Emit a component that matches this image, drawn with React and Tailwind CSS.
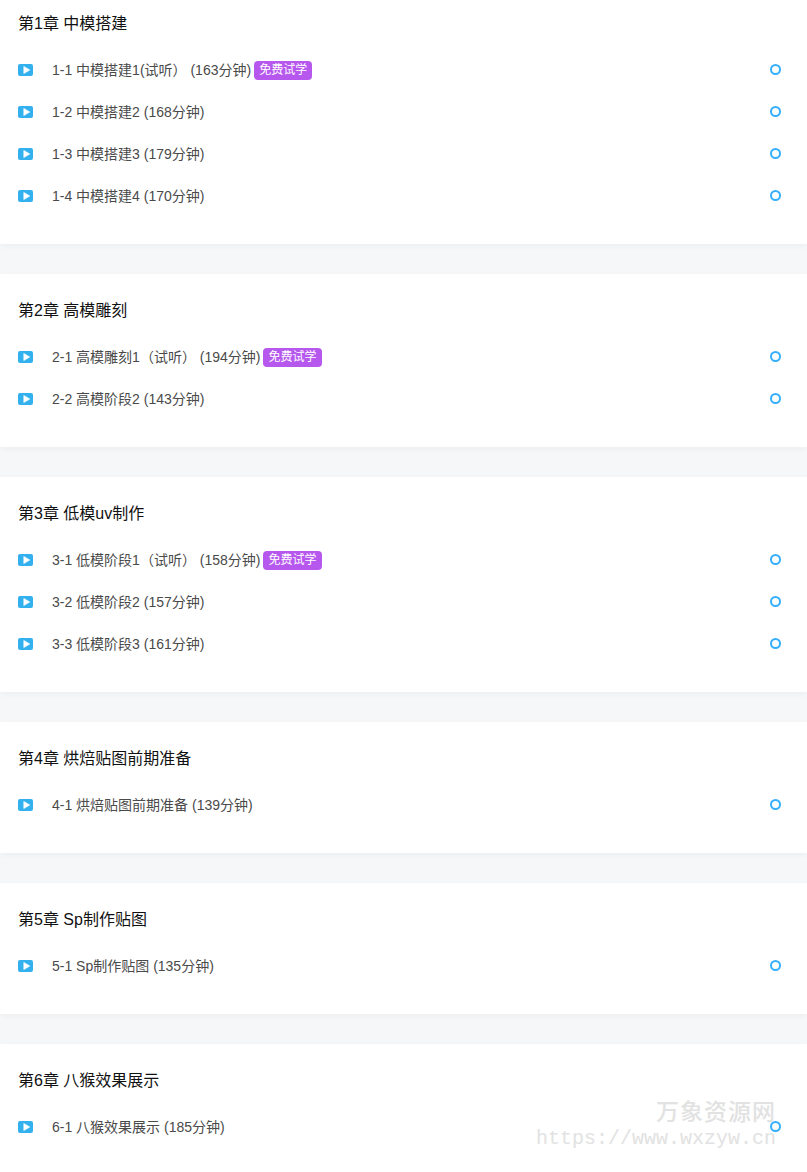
/**
 * App — course chapter list with lesson rows.
 */
const chapters = [
  {
    title: '第1章 中模搭建',
    first: true,
    lessons: [
      { text: '1-1 中模搭建1(试听） (163分钟)', free: true },
      { text: '1-2 中模搭建2 (168分钟)' },
      { text: '1-3 中模搭建3 (179分钟)' },
      { text: '1-4 中模搭建4 (170分钟)' },
    ],
  },
  {
    title: '第2章 高模雕刻',
    lessons: [
      { text: '2-1 高模雕刻1（试听） (194分钟)', free: true },
      { text: '2-2 高模阶段2 (143分钟)' },
    ],
  },
  {
    title: '第3章 低模uv制作',
    lessons: [
      { text: '3-1 低模阶段1（试听） (158分钟)', free: true },
      { text: '3-2 低模阶段2 (157分钟)' },
      { text: '3-3 低模阶段3 (161分钟)' },
    ],
  },
  {
    title: '第4章 烘焙贴图前期准备',
    lessons: [{ text: '4-1 烘焙贴图前期准备 (139分钟)' }],
  },
  {
    title: '第5章 Sp制作贴图',
    lessons: [{ text: '5-1 Sp制作贴图 (135分钟)' }],
  },
  {
    title: '第6章 八猴效果展示',
    lessons: [{ text: '6-1 八猴效果展示 (185分钟)' }],
  },
];

function PlayIcon() {
  return (
    <svg width="15" height="12" viewBox="0 0 15 12" className="shrink-0">
      <rect width="15" height="12" rx="2" fill="#33b1ee" />
      <path d="M5.8 2.4 L11.8 6 L5.8 9.6 Z" fill="#fff" stroke="#fff" strokeWidth="0.6" strokeLinejoin="round" />
    </svg>
  );
}

function LessonRow({ lesson }) {
  return (
    <div className="flex items-center h-[42px] pl-[18px] pr-[26px]">
      <PlayIcon />
      <span className="ml-[19px] text-sm text-[#4a4a4a] whitespace-pre">{lesson.text}</span>
      {lesson.free && (
        <span className="ml-[3px] h-[19px] px-[5px] rounded-[4px] bg-[#b658ee] text-white text-xs leading-[19px]">
          免费试学
        </span>
      )}
      <span className="ml-auto mb-px w-[11px] h-[11px] rounded-full border-2 border-[#35aefc]" />
    </div>
  );
}

function ChapterCard({ chapter }) {
  return (
    <section
      className={`bg-white shadow-[0_2px_6px_rgba(0,0,0,0.04)] pb-[27px] ${chapter.first ? 'pt-3' : 'pt-[25px] mt-[30px]'}`}
    >
      <h2 className="pl-[18px] text-base leading-6 text-[#111]">{chapter.title}</h2>
      <div className="mt-[13px]">
        {chapter.lessons.map((lesson) => (
          <LessonRow key={lesson.text} lesson={lesson} />
        ))}
      </div>
    </section>
  );
}

export default function App() {
  return (
    <div className="relative h-[1172px] overflow-hidden bg-[#f6f7f9] font-['Liberation_Sans','Noto_Sans_CJK_SC',sans-serif]">
      {chapters.map((chapter) => (
        <ChapterCard key={chapter.title} chapter={chapter} />
      ))}
      {/* Watermark */}
      <div className="absolute right-[31px] top-[1098px] flex flex-col items-end text-[#e2e2e2]">
        <span className="text-[23px] leading-[28px] tracking-[1px] font-medium">万象资源网</span>
        <span className="text-xl leading-[26px] font-['Liberation_Mono',monospace]">https://www.wxzyw.cn</span>
      </div>
    </div>
  );
}
